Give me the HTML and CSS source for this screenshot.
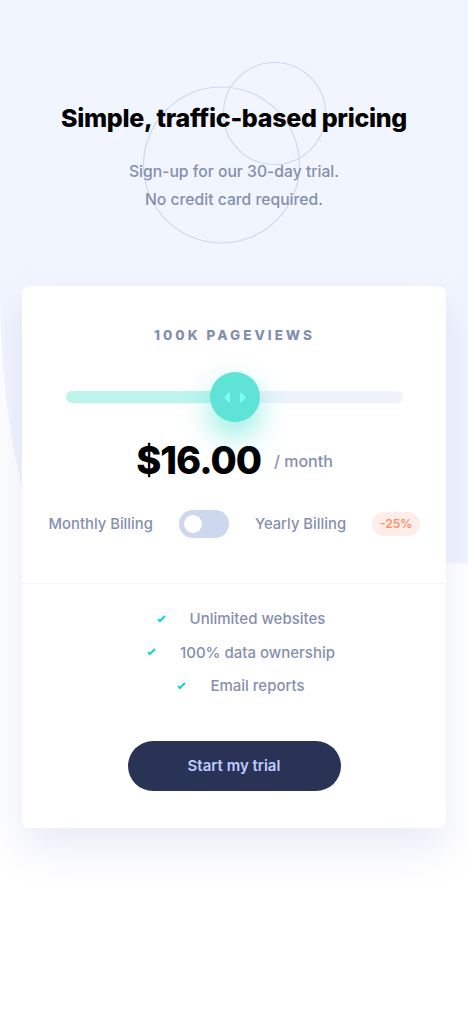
FILE: index.html
```html
<!DOCTYPE html>
<html lang="en">
<head>
<meta charset="utf-8">
<title>Interactive pricing component</title>
<link rel="stylesheet" href="styles.css">
</head>
<body>
<main class="page">
  <header class="hero">
    <svg class="circles" width="190" height="190" viewBox="0 0 190 190" aria-hidden="true">
      <g fill="none" stroke="#cfd8ef" stroke-width="1.2">
        <circle cx="81.5" cy="105" r="78"/>
        <circle cx="134.5" cy="53.5" r="51"/>
      </g>
    </svg>
    <h1 class="title">Simple, traffic-based pricing</h1>
    <p class="subtitle">Sign-up for our 30-day trial.<br>No credit card required.</p>
  </header>

  <section class="card">
    <div class="card-top">
      <p class="pageviews">100K Pageviews</p>
      <div class="slider">
        <div class="track">
          <div class="fill" style="width: 50%"></div>
          <div class="thumb" style="left: 50%">
            <svg width="22" height="13" viewBox="0 0 22 13" aria-hidden="true"><path fill="#80fff3" d="M16 2.558v7.884a1 1 0 001.735.679l3.639-3.943a1 1 0 000-1.356l-3.64-3.943A1 1 0 0016 2.558zM6 2.558v7.884a1 1 0 01-1.735.679L.626 7.178a1 1 0 010-1.356l3.64-3.943A1 1 0 016 2.558z"/></svg>
          </div>
        </div>
      </div>
      <div class="price-row">
        <span class="price">$16.00</span>
        <span class="per">/ month</span>
      </div>
      <div class="billing">
        <span class="billing-label">Monthly Billing</span>
        <span class="toggle"><span class="knob"></span></span>
        <span class="billing-label">Yearly Billing</span>
        <span class="discount">-25%</span>
      </div>
    </div>
    <div class="card-bottom">
      <ul class="features">
        <li class="feature"><svg class="check" width="9" height="8" viewBox="0 0 9 8" aria-hidden="true"><path fill="none" stroke="#10d8c4" stroke-width="2" d="M1 4.134l1.907 1.908L7.949 1"/></svg><span>Unlimited websites</span></li>
        <li class="feature"><svg class="check" width="9" height="8" viewBox="0 0 9 8" aria-hidden="true"><path fill="none" stroke="#10d8c4" stroke-width="2" d="M1 4.134l1.907 1.908L7.949 1"/></svg><span>100% data ownership</span></li>
        <li class="feature"><svg class="check" width="9" height="8" viewBox="0 0 9 8" aria-hidden="true"><path fill="none" stroke="#10d8c4" stroke-width="2" d="M1 4.134l1.907 1.908L7.949 1"/></svg><span>Email reports</span></li>
      </ul>
      <button class="cta" type="button">Start my trial</button>
    </div>
  </section>
</main>
</body>
</html>
```

FILE: styles.css
```css
* { box-sizing: border-box; }

html, body {
  margin: 0;
  padding: 0;
}

body {
  background: #ffffff;
  font-family: Inter, "Noto Sans", "Liberation Sans", sans-serif;
  color: #858fad;
  min-height: 1015px;
}

.page {
  position: relative;
  padding-bottom: 120px;
  isolation: isolate;
}

.page::before {
  content: "";
  position: absolute;
  top: 0;
  left: 0;
  right: 0;
  height: 563px;
  background: #f1f5fe;
  border-bottom-left-radius: 72px 276px;
  z-index: -1;
}

.hero {
  position: relative;
  padding-top: 103px;
  text-align: center;
}

.circles {
  position: absolute;
  top: 60px;
  left: 50%;
  margin-left: -94px;
  z-index: -1;
}

.title {
  margin: 0;
  font-size: 25px;
  line-height: 30px;
  font-weight: 800;
  letter-spacing: -0.3px;
  color: #000000;
}

.subtitle {
  margin: 25px 0 0;
  font-size: 15.7px;
  line-height: 28px;
  font-weight: 500;
}

.card {
  margin: 72px 22px 0;
  background: #ffffff;
  border-radius: 8px;
  box-shadow: 0 20px 40px rgba(122, 137, 199, 0.17);
}

.card-top {
  padding: 40px 43px 45px 44px;
  border-bottom: 1px solid #f2f4fb;
  display: flex;
  flex-direction: column;
  align-items: center;
}

.pageviews {
  margin: 0;
  font-size: 13.5px;
  line-height: 18px;
  font-weight: 800;
  letter-spacing: 3px;
  text-transform: uppercase;
}

.slider {
  align-self: stretch;
  height: 50px;
  margin-top: 28px;
  display: flex;
  align-items: center;
}

.track {
  position: relative;
  flex: 1;
  height: 12px;
  border-radius: 6px;
  background: #eef2fb;
}

.fill {
  height: 100%;
  border-radius: 6px 0 0 6px;
  background: #bdf5ee;
}

.thumb {
  position: absolute;
  top: 50%;
  width: 50px;
  height: 50px;
  margin: -25px 0 0 -25px;
  border-radius: 50%;
  background: #5fe3d6;
  box-shadow: 0 14px 30px rgba(16, 213, 194, 0.45);
  display: flex;
  align-items: center;
  justify-content: center;
}

.price-row {
  margin-top: 14px;
  display: flex;
  align-items: center;
  gap: 13px;
}

.price {
  font-size: 38px;
  line-height: 48px;
  font-weight: 800;
  letter-spacing: -1px;
  color: #000000;
}

.per {
  font-size: 16px;
  font-weight: 500;
  padding-top: 2px;
}

.billing {
  margin-top: 26px;
  display: flex;
  align-items: center;
  gap: 26px;
  white-space: nowrap;
}

.billing-label {
  font-size: 14.8px;
  font-weight: 500;
}

.toggle {
  flex: none;
  width: 50px;
  height: 28px;
  border-radius: 14px;
  background: #cdd7ee;
  padding: 0 5px;
  display: flex;
  align-items: center;
}

.knob {
  width: 18px;
  height: 18px;
  border-radius: 50%;
  background: #ffffff;
}

.discount {
  font-size: 12px;
  font-weight: 600;
  color: #ff8c66;
  background: #feede8;
  border-radius: 12px;
  padding: 0 8px;
  height: 24px;
  line-height: 24px;
}

.card-bottom {
  padding: 18px 0 37px;
  display: flex;
  flex-direction: column;
  align-items: center;
}

.features {
  list-style: none;
  margin: 0;
  padding: 0;
  display: flex;
  flex-direction: column;
  align-items: center;
}

.feature {
  display: flex;
  align-items: center;
  gap: 24px;
  font-size: 15px;
  line-height: 33.5px;
  font-weight: 500;
  padding-left: 14px;
}

.check { display: block; }

.cta {
  margin-top: 38px;
  width: 213px;
  height: 50px;
  border: 0;
  border-radius: 25px;
  background: #293356;
  color: #bdccff;
  font-family: inherit;
  font-size: 15px;
  font-weight: 600;
}
```
